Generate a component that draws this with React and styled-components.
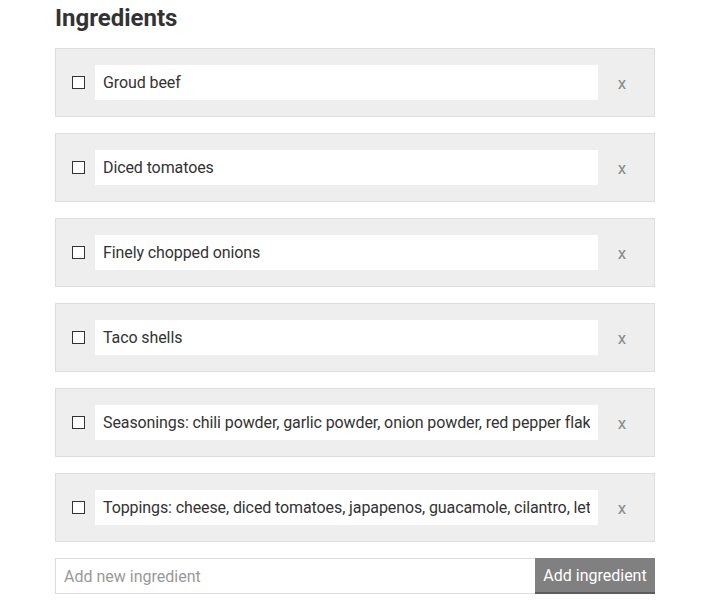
import React, { useState } from 'react'
import styled, { createGlobalStyle } from 'styled-components'

const GlobalStyle = createGlobalStyle`
  body {
    margin: 0;
    background: #fff;
    font-family: Roboto, "Liberation Sans", sans-serif;
    color: #333;
  }
`

const Page = styled.div`
  width: 600px;
  padding: 4px 0 0 55px;
`

const Title = styled.h2`
  margin: 0 0 16px;
  font-size: 24px;
  line-height: 28px;
  font-weight: 700;
  color: #333;
`

const List = styled.ul`
  list-style: none;
  margin: 0;
  padding: 0;
  display: flex;
  flex-direction: column;
  gap: 16px;
`

const Item = styled.li`
  display: flex;
  align-items: center;
  height: 69px;
  box-sizing: border-box;
  padding-left: 16px;
  background: #eee;
  border: 1px solid #ddd;
`

const Check = styled.input`
  appearance: none;
  width: 13px;
  height: 13px;
  margin: 0 10px 0 0;
  border: 1px solid #333;
  background: #fff;
  box-sizing: border-box;
  flex-shrink: 0;
`

const ItemInput = styled.input`
  width: 503px;
  height: 35px;
  box-sizing: border-box;
  border: none;
  outline: none;
  padding: 0 8px;
  background: #fff;
  font-family: Roboto, "Liberation Sans", sans-serif;
  font-size: 16px;
  letter-spacing: -0.1px;
  color: #333;
`

const Remove = styled.button`
  flex: 1;
  border: none;
  background: none;
  padding: 0 8px 0 0;
  font-family: Roboto, "Liberation Sans", sans-serif;
  font-size: 17px;
  color: #8a8a8a;
  cursor: pointer;
`

const AddRow = styled.form`
  display: flex;
  margin-top: 16px;
  height: 36px;
`

const AddInput = styled.input`
  width: 480px;
  box-sizing: border-box;
  border: 1px solid #ddd;
  border-right: none;
  padding: 0 8px;
  outline: none;
  font-family: Roboto, "Liberation Sans", sans-serif;
  font-size: 16px;
  color: #333;
  &::placeholder {
    color: #999;
  }
`

const AddButton = styled.button`
  width: 120px;
  border: none;
  border-bottom: 2px solid #5c5c5c;
  background: #808080;
  color: #fff;
  font-family: Roboto, "Liberation Sans", sans-serif;
  font-size: 16px;
  padding: 0;
`

const initial = [
  'Groud beef',
  'Diced tomatoes',
  'Finely chopped onions',
  'Taco shells',
  'Seasonings: chili powder, garlic powder, onion powder, red pepper flakes, cumin',
  'Toppings: cheese, diced tomatoes, japapenos, guacamole, cilantro, lettuce',
]

export default function App() {
  const [items] = useState(initial)
  return (
    <>
      <GlobalStyle />
      <Page>
        <Title>Ingredients</Title>
        <List>
          {items.map((text, i) => (
            <Item key={i}>
              <Check type="checkbox" />
              <ItemInput defaultValue={text} />
              <Remove type="button">x</Remove>
            </Item>
          ))}
        </List>
        <AddRow onSubmit={e => e.preventDefault()}>
          <AddInput placeholder="Add new ingredient" />
          <AddButton type="submit">Add ingredient</AddButton>
        </AddRow>
      </Page>
    </>
  )
}
